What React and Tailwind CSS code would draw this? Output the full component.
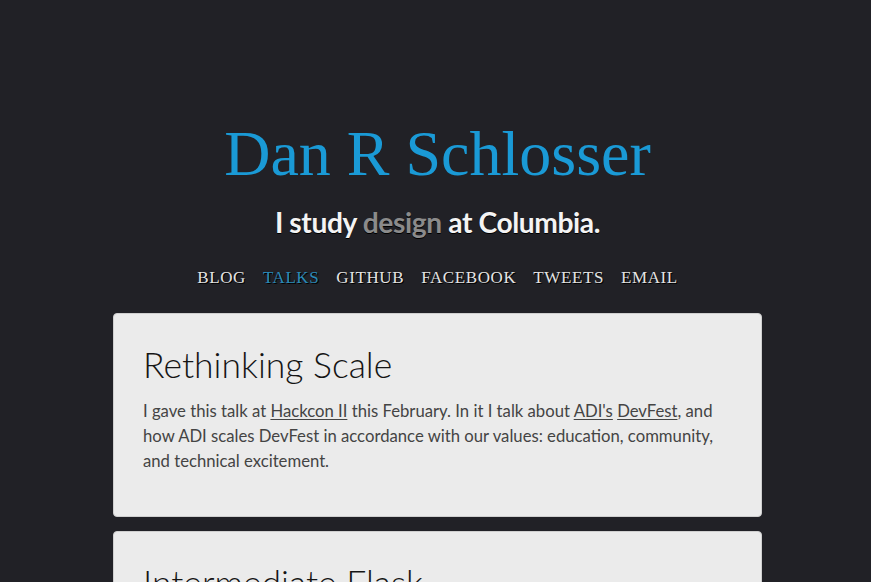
import React from 'react';

const navItems = ['Blog', 'Talks', 'GitHub', 'Facebook', 'Tweets', 'Email'];

const talks = [
  {
    title: 'Rethinking Scale',
    body: (
      <>
        I gave this talk at <a href="#" className="underline decoration-1 underline-offset-2">Hackcon II</a> this February. In it I talk about{' '}
        <a href="#" className="underline decoration-1 underline-offset-2">ADI's</a>{' '}
        <a href="#" className="underline decoration-1 underline-offset-2">DevFest</a>, and how ADI scales DevFest in accordance with our values: education, community, and technical excitement.
      </>
    ),
  },
  {
    title: 'Intermediate Flask',
    body: 'A walkthrough of building larger Flask applications.',
  },
];

export default function App() {
  return (
    <div className="min-h-screen bg-[#212126] pb-10 pl-[4px]">
      <header className="pt-[118px] text-center">
        <h1 className="font-['Liberation_Serif',serif] text-[64px] leading-[72px] text-[#1a9ad6] font-normal">
          Dan R Schlosser
        </h1>
        <p className="mt-[15px] font-['Lato',sans-serif] text-[28.2px] leading-[34px] font-bold tracking-[-0.4px] text-[#f4f4f4] [text-shadow:0_1px_0_#000]">
          I study <span className="text-[#8b8b8b]">design</span> at Columbia.
        </p>
        <nav className="mt-[29px] flex justify-center gap-[17px] font-['Liberation_Serif',serif] text-[17px] uppercase leading-[20px] tracking-[0.6px] text-[#e4e4e4] [text-shadow:1px_1px_0_#000]">
          {navItems.map((item) => (
            <a key={item} href="#" className={item === 'Talks' ? 'text-[#2a8ab8]' : ''}>
              {item}
            </a>
          ))}
        </nav>
      </header>

      <main className="mx-auto mt-[25px] flex w-[649px] flex-col gap-[14px]">
        {talks.map((talk) => (
          <article
            key={talk.title}
            className="rounded-[4px] border border-[#cfcfcf] bg-[#ebebeb] px-[29px] pt-[28px] pb-[42px]"
          >
            <h2 className="font-['Lato',sans-serif] text-[35.5px] leading-[46px] font-light text-[#151515]">
              {talk.title}
            </h2>
            <p className="mt-[11px] font-['Lato',sans-serif] text-[16.7px] leading-[25px] text-[#444]">
              {talk.body}
            </p>
          </article>
        ))}
      </main>
    </div>
  );
}
